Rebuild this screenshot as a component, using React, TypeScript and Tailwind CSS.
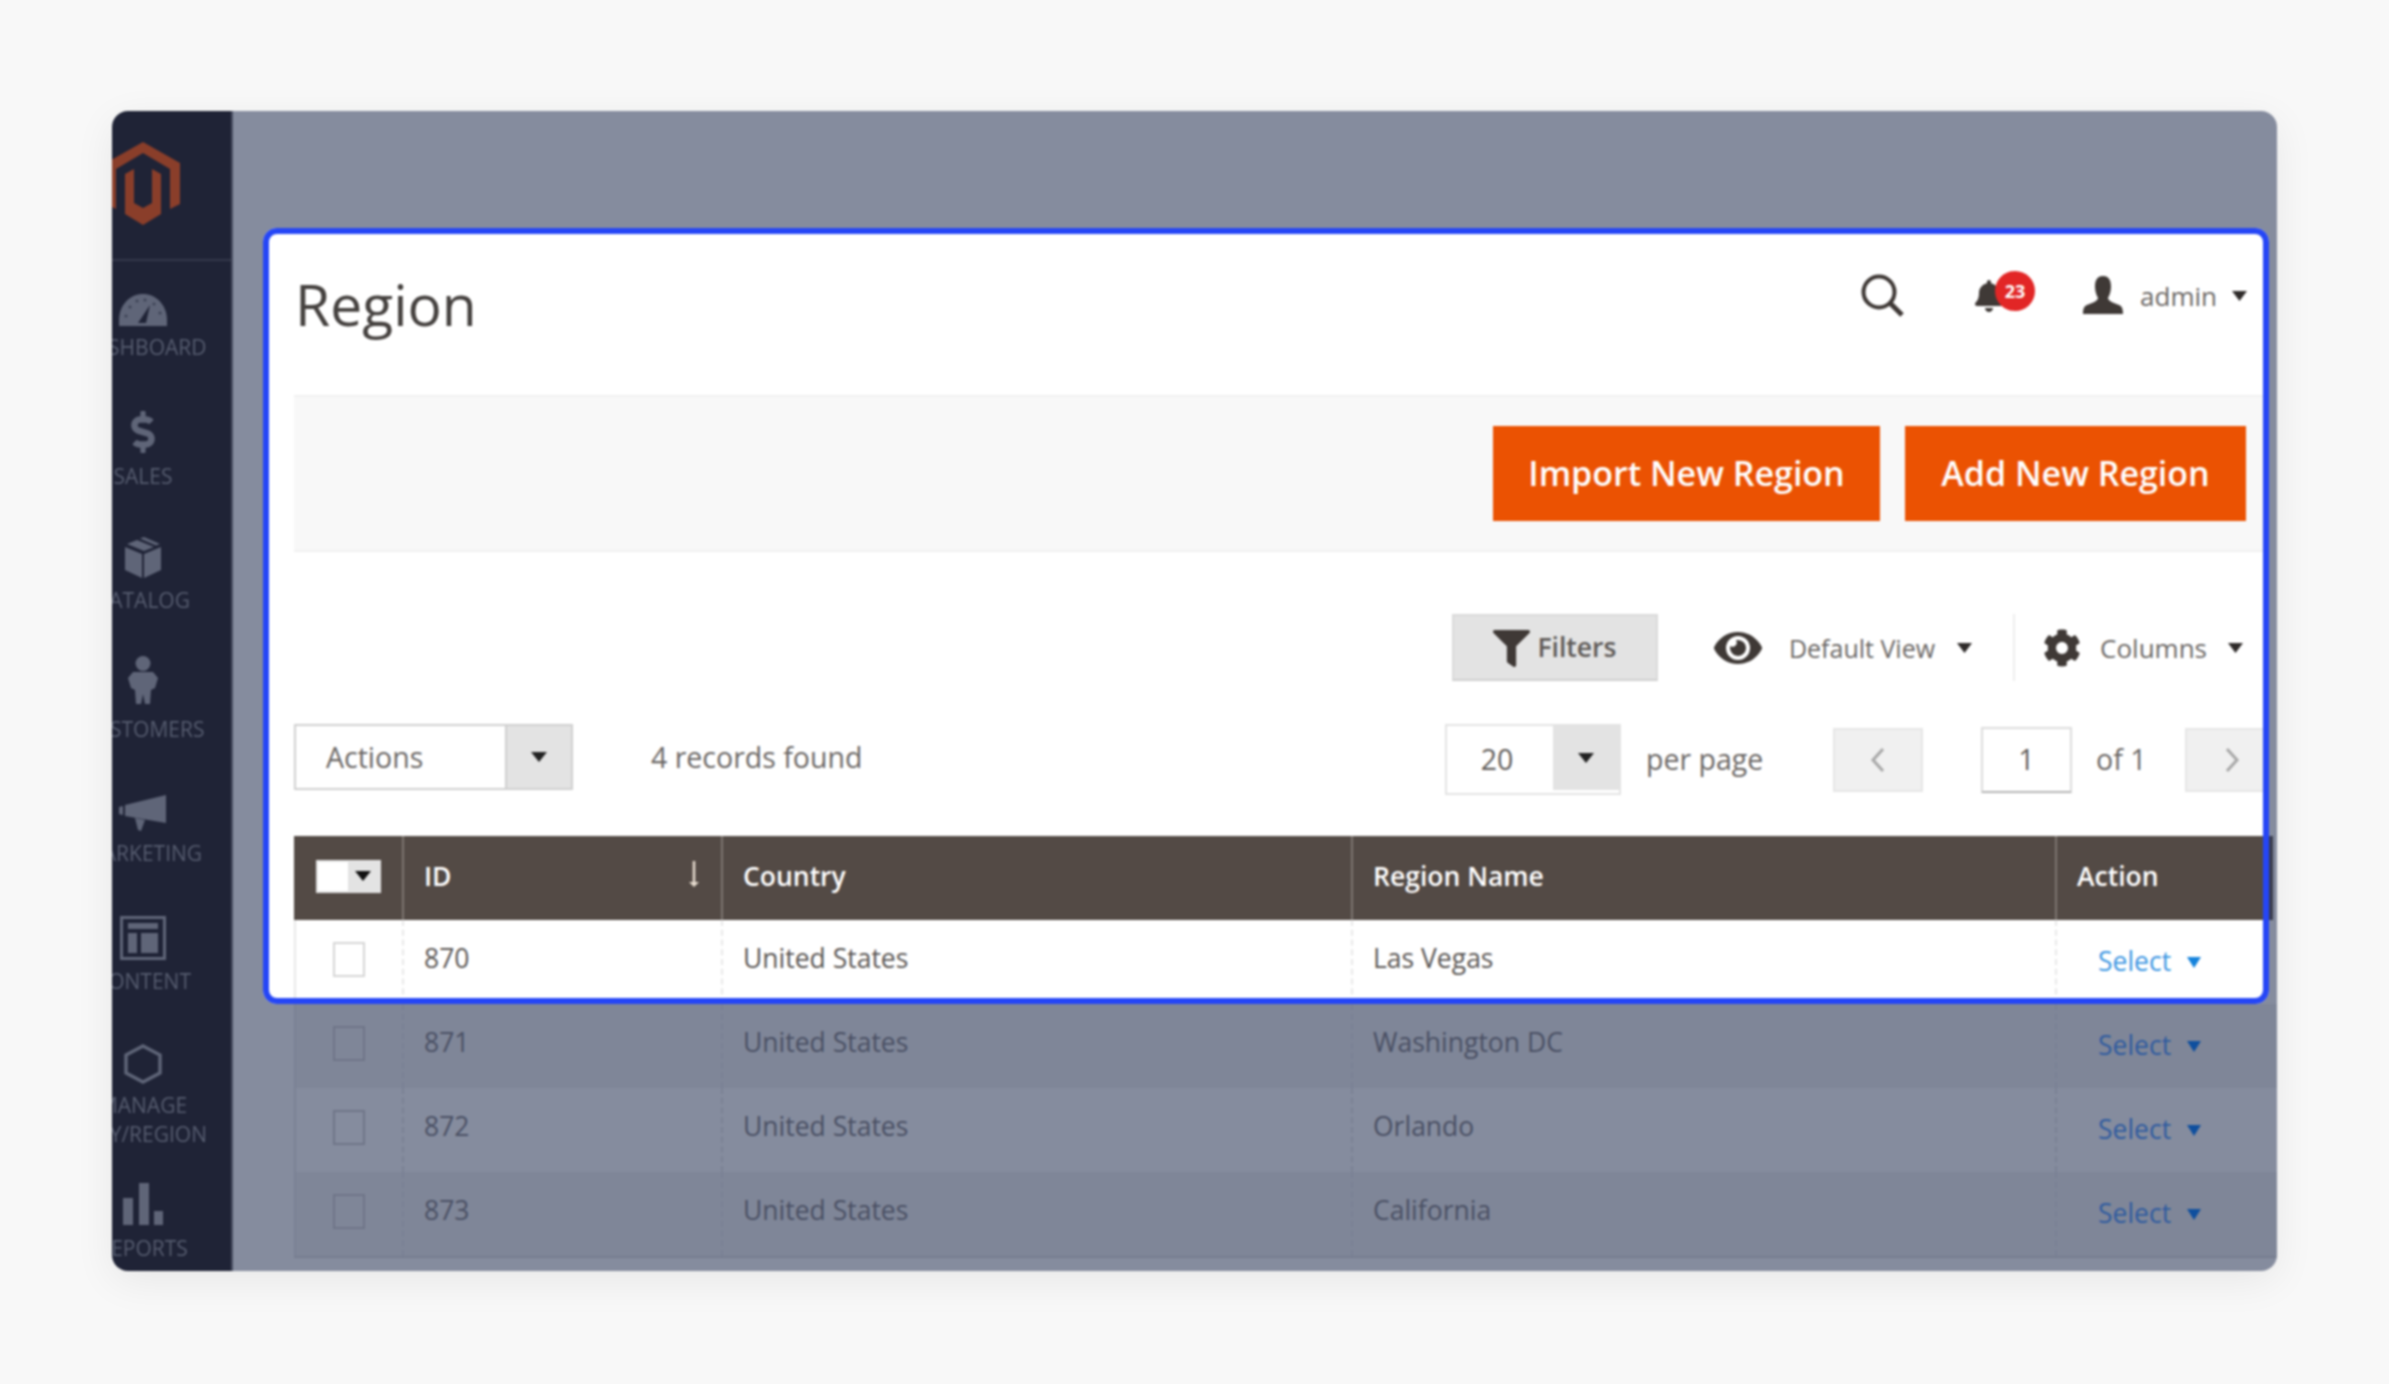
import React from "react";
import { FaBell, FaCog, FaDollarSign, FaEye, FaFilter } from "react-icons/fa";

function Caret({ w = 15, h = 10, color = "#2f2b2a" }: { w?: number; h?: number; color?: string }) {
  return (
    <svg width={w} height={h} viewBox="0 0 15 10" className="shrink-0" preserveAspectRatio="none">
      <polygon points="0,0 15,0 7.5,10" fill={color} />
    </svg>
  );
}

function Logo() {
  return (
    <svg width="74" height="83" viewBox="0 0 74 83">
      <path d="M37 0 74 21V62L64 67V27L37 11 10 27V67L0 62V21Z" fill="#8a3e2a" />
      <path d="M19 32 28 27V61L37 66 46 61V27L55 32V72L37 83 19 72Z" fill="#8a3e2a" />
    </svg>
  );
}

function Gauge() {
  return (
    <svg width="48" height="32" viewBox="0 0 48 32">
      <path d="M0 32V26C0 12 10 0 24 0S48 12 48 26V32Z" fill="#5f6578" />
      <g fill="#3c4154">
        <circle cx="7" cy="22" r="1.5" />
        <circle cx="11" cy="13" r="1.5" />
        <circle cx="18" cy="7" r="1.5" />
        <circle cx="26" cy="6" r="1.5" />
        <circle cx="35" cy="10" r="1.5" />
        <circle cx="41" cy="19" r="1.5" />
      </g>
      <path d="M19 29 31 11 27 29Z" fill="#1f2336" />
    </svg>
  );
}

function Box() {
  return (
    <svg width="40" height="42" viewBox="0 0 40 42">
      <path d="M2 11 19 18V42L2 34Z" fill="#5f6578" />
      <path d="M21 18 38 11V34L21 42Z" fill="#5f6578" />
      <path d="M4 8 14 4 31 11 21 15Z" fill="#5f6578" />
      <path d="M17 2.5 21 1 37 8 33 9.5Z" fill="#5f6578" />
    </svg>
  );
}

function Megaphone() {
  return (
    <svg width="48" height="36" viewBox="0 0 48 36">
      <path d="M0 12 4 11V20L0 19Z" fill="#5f6578" />
      <path d="M6 10 47 0V28L6 21Z" fill="#5f6578" />
      <path d="M16 23 26 25 22 36 19 35Z" fill="#5f6578" />
    </svg>
  );
}

function Person() {
  return (
    <svg width="34" height="48" viewBox="0 0 34 48">
      <circle cx="17" cy="7.5" r="7.5" fill="#5f6578" />
      <path d="M7 16H27L32 22 29 32 25 34 24 48H19L17 38 15 48H10L9 34 5 32 2 22Z" fill="#5f6578" />
    </svg>
  );
}

function Content() {
  return (
    <svg width="46" height="44" viewBox="0 0 46 44">
      <rect x="1.5" y="1.5" width="43" height="41" fill="none" stroke="#5f6578" strokeWidth="3" />
      <rect x="8" y="7" width="30" height="6" fill="#5f6578" />
      <rect x="8" y="17" width="9" height="20" fill="#5f6578" />
      <rect x="21" y="17" width="17" height="20" fill="#5f6578" />
    </svg>
  );
}

function Hexagon() {
  return (
    <svg width="38" height="40" viewBox="0 0 38 40">
      <polygon points="19,2 36,11 36,29 19,38 2,29 2,11" fill="none" stroke="#5f6578" strokeWidth="3.5" />
    </svg>
  );
}

function Bars() {
  return (
    <svg width="42" height="42" viewBox="0 0 42 42">
      <rect x="1" y="15" width="10" height="27" fill="#5f6578" />
      <rect x="17" y="0" width="10" height="42" fill="#5f6578" />
      <rect x="32" y="28" width="9" height="14" fill="#5f6578" />
    </svg>
  );
}

function SideItem({ icon, h, labels, labelTop, iconH }: { icon: React.ReactNode; h: string; labels: string[]; labelTop: string; iconH: string }) {
  return (
    <div className={`flex flex-col items-center shrink-0 ${h}`}>
      <div className={`flex items-center justify-center ${iconH}`}>{icon}</div>
      <div className={`text-center text-[21px] leading-[29px] text-[#565c6f] uppercase whitespace-nowrap ${labelTop}`}>
        {labels.map((l) => (
          <div key={l}>{l}</div>
        ))}
      </div>
    </div>
  );
}

function Sidebar() {
  return (
    <div className="w-[121px] shrink-0 h-full bg-[#1f2336] border-r-2 border-[#474c60] overflow-hidden">
      <div className="w-[178px] -ml-[58px] flex flex-col items-center pt-[31px]">
        <Logo />
        <div className="w-full h-[2px] bg-[#34384a] mt-[34px] mb-[33px]" />
        <SideItem h="h-[117px]" iconH="h-[32px]" labelTop="mt-[7px]" labels={["Dashboard"]} icon={<Gauge />} />
        <SideItem h="h-[125px]" iconH="h-[42px]" labelTop="mt-[9px]" labels={["Sales"]} icon={<FaDollarSign size={42} color="#5f6578" />} />
        <SideItem h="h-[120px]" iconH="h-[42px]" labelTop="mt-[8px]" labels={["Catalog"]} icon={<Box />} />
        <SideItem h="h-[139px]" iconH="h-[48px]" labelTop="mt-[11px]" labels={["Customers"]} icon={<Person />} />
        <SideItem h="h-[121px]" iconH="h-[36px]" labelTop="mt-[8px]" labels={["Marketing"]} icon={<Megaphone />} />
        <SideItem h="h-[128px]" iconH="h-[44px]" labelTop="mt-[7px]" labels={["Content"]} icon={<Content />} />
        <SideItem h="h-[139px]" iconH="h-[40px]" labelTop="mt-[7px]" labels={["Manage", "City/Region"]} icon={<Hexagon />} />
        <SideItem h="h-[80px]" iconH="h-[42px]" labelTop="mt-[9px]" labels={["Reports"]} icon={<Bars />} />
      </div>
    </div>
  );
}

function Row({ id, region, dim, bg }: { id: string; region: string; dim?: boolean; bg?: string }) {
  const text = dim ? "text-[#4a5064]" : "text-[#5a5654]";
  const line = dim ? "border-[#7a8194]" : "border-[#e8e8e8]";
  return (
    <div className={`flex h-[84px] shrink-0 items-stretch text-[26.5px] ${text} ${bg ?? ""} border-l-2 ${line}`}>
      <div className={`w-[108px] shrink-0 flex items-center justify-center pb-[6px] border-r-2 border-dashed ${line}`}>
        <div className={`w-[32px] h-[35px] border-2 ${dim ? "border-[#6f7588]" : "border-[#d6d6d6] bg-white"}`} />
      </div>
      <div className={`w-[319px] shrink-0 flex items-center pl-[20px] pb-[6px] border-r-2 border-dashed ${line}`}>{id}</div>
      <div className={`w-[630px] shrink-0 flex items-center pl-[20px] pb-[6px] border-r-2 border-dashed ${line}`}>United States</div>
      <div className={`w-[704px] shrink-0 flex items-center pl-[20px] pb-[6px] border-r-2 border-dashed ${line}`}>{region}</div>
      <div className={`flex-1 flex items-center pl-[41px] gap-[16px] ${dim ? "text-[#2f5b9f]" : "text-[#3d96e2]"}`}>
        <span>Select</span>
        <Caret w={14} h={11} color={dim ? "#0f4f9e" : "#1583dc"} />
      </div>
    </div>
  );
}

function Card() {
  return (
    <div className="relative w-[2006px] h-[776px] bg-white rounded-[14px] shrink-0">
      <div className="absolute inset-0 z-10 border-[6px] border-[#2546f6] rounded-[14px] pointer-events-none" />
      <div className="flex flex-col pl-[31px] text-[#5a5654]">
        <div className="h-[167px] flex pr-[22px]">
          <div className="text-[57px] leading-[76px] text-[#45413f] pt-[38px] pl-[1px] h-fit">Region</div>
          <div className="ml-auto flex items-start">
            <svg width="44" height="44" viewBox="0 0 44 44" className="mt-[46px]">
              <circle cx="18" cy="18" r="15.5" fill="none" stroke="#3f3936" strokeWidth="4" />
              <line x1="29" y1="29" x2="41" y2="41" stroke="#3f3936" strokeWidth="5" />
            </svg>
            <div className="relative mt-[52px] ml-[68px] w-[70px] h-[36px]">
              <FaBell size={32} color="#3f3936" />
              <div className="absolute left-[22px] -top-[9px] w-[40px] h-[40px] rounded-full bg-[#e22626] flex items-center justify-center text-white text-[18px] font-bold">23</div>
            </div>
            <svg width="40" height="38" viewBox="0 0 40 38" className="mt-[48px] ml-[40px]">
              <path d="M20 0C13 0 12 6 12 11 12 16 14 20 15 22 15 25 9 27 4 29 1 30 0 33 0 38H40C40 33 39 30 36 29 31 27 25 25 25 22 26 20 28 16 28 11 28 6 27 0 20 0Z" fill="#3f3936" />
            </svg>
            <div className="ml-[17px] mt-[51px] text-[26px] leading-[34px] text-[#6b6765]">admin</div>
            <div className="ml-[15px] mt-[63px]"><Caret /></div>
          </div>
        </div>

        <div className="h-[157px] mr-[6px] bg-[#f8f8f8] border-y-2 border-[#f1f1f1] flex items-center justify-end pr-[17px] gap-[25px]">
          <div className="w-[387px] h-[95px] bg-[#eb5202] text-white text-[34px] font-semibold flex items-center justify-center">Import New Region</div>
          <div className="w-[341px] h-[95px] bg-[#eb5202] text-white text-[34px] font-semibold flex items-center justify-center">Add New Region</div>
        </div>

        <div className="mt-[62px] h-[67px] flex items-center justify-end pr-[26px] text-[26px]">
          <div className="w-[206px] h-[67px] bg-[#e3e3e3] border-2 border-[#dadada] border-b-[#cfcfcf] flex items-center justify-center gap-[7px] text-[26.5px] font-semibold text-[#5f5b58] pt-[1px]">
            <FaFilter size={37} color="#3f3936" />
            <span>Filters</span>
          </div>
          <div className="ml-[56px]"><FaEye size={48} color="#3f3936" /></div>
          <span className="ml-[27px] text-[25px] text-[#6b6765] pt-[2px]">Default View</span>
          <div className="ml-[22px]"><Caret /></div>
          <div className="ml-[41px] w-[2px] h-[67px] bg-[#eeeeee]" />
          <div className="ml-[28px]"><FaCog size={38} color="#3f3936" /></div>
          <span className="ml-[19px] text-[#6b6765] pt-[2px]">Columns</span>
          <div className="ml-[21px]"><Caret /></div>
        </div>

        <div className="mt-[43px] h-[71px] flex items-center text-[28.5px] text-[#5f5b58]">
          <div className="w-[279px] h-[66px] mb-[5px] border-2 border-[#d0d0d0] flex items-stretch bg-white">
            <div className="flex-1 flex items-center pl-[30px] text-[#6b6765]">Actions</div>
            <div className="w-[66px] bg-[#e3e3e3] border-l-2 border-[#cfcfcf] flex items-center justify-center"><Caret w={16} h={10} color="#222" /></div>
          </div>
          <div className="ml-[78px] mb-[5px] text-[#6b6765]">4 records found</div>
          <div className="ml-auto w-[176px] h-[71px] border-2 border-[#e3e3e3] flex items-stretch">
            <div className="flex-1 flex items-center justify-center pr-[6px]">20</div>
            <div className="w-[66px] h-[64px] bg-[#e3e3e3] flex items-center justify-center"><Caret w={16} h={10} color="#222" /></div>
          </div>
          <div className="ml-[25px] w-[187px] text-[#6b6765]">per page</div>
          <div className="w-[90px] h-[64px] bg-[#f0f0f0] border-2 border-[#e6e6e6] flex items-center justify-center">
            <svg width="16" height="26" viewBox="0 0 16 26"><polyline points="13,2 3,13 13,24" fill="none" stroke="#a8a8a8" strokeWidth="3" /></svg>
          </div>
          <div className="ml-[58px] w-[91px] h-[66px] border-2 border-[#dcdcdc] border-b-[#b5b5b5] flex items-center justify-center">1</div>
          <div className="ml-[24px] w-[89px] text-[#6b6765]">of 1</div>
          <div className="w-[84px] h-[64px] bg-[#f0f0f0] border-2 border-[#e6e6e6] flex items-center justify-center pl-[10px]">
            <svg width="16" height="26" viewBox="0 0 16 26"><polyline points="3,2 13,13 3,24" fill="none" stroke="#a8a8a8" strokeWidth="3" /></svg>
          </div>
        </div>

        <div className="mt-[41px] w-[1979px] h-[84px] bg-[#534a45] flex text-white text-[26.5px] font-semibold">
          <div className="w-[110px] shrink-0 border-r-2 border-[#7d7570] flex items-center justify-center pb-[4px]">
            <div className="w-[65px] h-[33px] bg-[#e3e3e3] flex border-2 border-[#e3e3e3]">
              <div className="w-[30px] h-full bg-white" />
              <div className="flex-1 flex items-center justify-center"><Caret w={16} h={10} color="#111" /></div>
            </div>
          </div>
          <div className="w-[319px] shrink-0 border-r-2 border-[#7d7570] flex items-center pl-[20px] relative pb-[3px]">
            ID
            <svg width="10" height="26" viewBox="0 0 10 26" className="ml-auto mr-[22px] mb-[6px]">
              <line x1="5" y1="0" x2="5" y2="24" stroke="#e8ddd0" strokeWidth="2.5" />
              <polygon points="0,21 10,21 5,26" fill="#e8ddd0" />
            </svg>
          </div>
          <div className="w-[630px] shrink-0 border-r-2 border-[#7d7570] flex items-center pl-[20px] pb-[3px]">Country</div>
          <div className="w-[704px] shrink-0 border-r-2 border-[#7d7570] flex items-center pl-[20px] pb-[3px]">Region Name</div>
          <div className="flex-1 flex items-center pl-[20px] pb-[3px]">Action</div>
          <div className="w-[4px] shrink-0 bg-[#3a3d4f]" />
        </div>
        <div className="w-[1975px]">
          <Row id="870" region="Las Vegas" />
        </div>
      </div>
    </div>
  );
}

export default function App() {
  return (
    <div className="w-full h-[1384px] bg-[#f8f8f8] pl-[112px] pt-[111px] font-['Open_Sans',sans-serif] overflow-hidden">
      <div className="w-[2165px] h-[1160px] rounded-[16px] overflow-hidden flex shadow-[0_10px_40px_rgba(0,0,0,0.07)] blur-[0.8px]">
        <Sidebar />
        <div className="flex-1 h-full bg-[#858c9e] pt-[117px] pl-[30px] flex flex-col">
          <Card />
          <div className="ml-[31px] flex flex-col border-b-2 border-[#767d90]">
            <Row dim id="871" region="Washington DC" bg="bg-[#7f8698]" />
            <Row dim id="872" region="Orlando" />
            <Row dim id="873" region="California" bg="bg-[#7f8698]" />
          </div>
        </div>
      </div>
    </div>
  );
}
